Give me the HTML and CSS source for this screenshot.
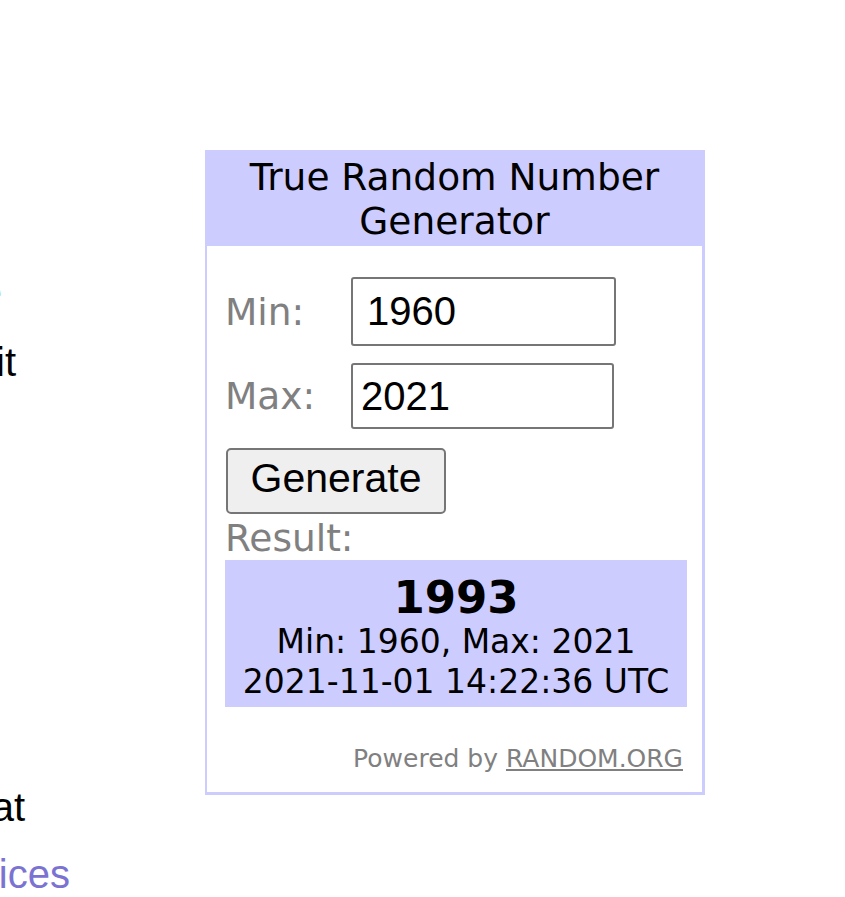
FILE: index.html
```html
<!DOCTYPE html>
<html>
<head>
<meta charset="utf-8">
<link rel="stylesheet" href="styles.css">
</head>
<body>
<div class="page">
  <div class="side">
    <div class="side-line l1">Learn more</div>
    <div class="side-line l2">about it</div>
    <div class="side-line l3">What</div>
    <div class="side-line l4">services</div>
  </div>
  <div class="widget">
    <div class="widget-head">True Random Number Generator</div>
    <div class="widget-body">
      <div class="row row-min">
        <span class="label">Min:</span>
        <input class="field field-min" type="text" value="1960">
      </div>
      <div class="row row-max">
        <span class="label">Max:</span>
        <input class="field field-max" type="text" value="2021">
      </div>
      <button class="gen" type="button">Generate</button>
      <div class="result-label">Result:</div>
      <div class="result">
        <div class="result-num">1993</div>
        <div class="result-line">Min: 1960, Max: 2021</div>
        <div class="result-line">2021-11-01 14:22:36 UTC</div>
      </div>
      <div class="powered">Powered by <a class="powered-link" href="#">RANDOM.ORG</a></div>
    </div>
  </div>
</div>
</body>
</html>
```
FILE: styles.css
```css
html, body {
  margin: 0;
  padding: 0;
  background: #ffffff;
  overflow: hidden;
}

.page {
  display: flex;
  align-items: flex-start;
  width: 845px;
  height: 897px;
}

.side {
  flex: none;
  width: 400px;
  margin-left: -320px;
  font-family: "Liberation Sans", Arial, sans-serif;
  font-size: 40px;
  line-height: 46px;
  color: #000000;
  text-align: right;
  white-space: nowrap;
}

.l1 { margin-top: 269px; padding-right: 78px; color: #66c2ff; }
.l2 { margin-top: 24px; padding-right: 64px; }
.l3 { margin-top: 399px; padding-right: 55px; }
.l4 { margin-top: 21px; padding-right: 10px; color: #7b73d2; }

.widget {
  flex: none;
  margin-top: 150px;
  margin-left: 125px;
  width: 495px;
  border-style: solid;
  border-color: #ccccff;
  border-width: 2px 3px 3px 2px;
  background: #ffffff;
  font-family: "DejaVu Sans", Verdana, sans-serif;
}

.widget-head {
  background: #ccccff;
  color: #000000;
  font-size: 37.5px;
  line-height: 44px;
  text-align: center;
  padding: 3px 0;
}

.widget-body {
  padding: 31px 15px 18px 18px;
}

.row {
  display: flex;
  align-items: center;
}

.row-max { margin-top: 17px; }

.label {
  width: 126px;
  flex: none;
  color: #808080;
  font-size: 37.5px;
  line-height: 44px;
}

.field {
  box-sizing: border-box;
  margin: 0;
  border: 2px solid #767676;
  border-radius: 3px;
  font-family: "Liberation Sans", Arial, sans-serif;
  font-size: 40px;
  color: #000000;
  background: #ffffff;
  outline: none;
}

.field-min { width: 265px; height: 69px; padding: 0 14px; }
.field-max { width: 263px; height: 66px; padding: 0 8px; }

.gen {
  display: block;
  box-sizing: border-box;
  margin: 19px 0 0 1px;
  width: 220px;
  height: 66px;
  padding: 0 0 6px 0;
  background: #efefef;
  border: 2px solid #767676;
  border-radius: 5px;
  font-family: "Liberation Sans", Arial, sans-serif;
  font-size: 41px;
  color: #000000;
}

.result-label {
  margin-top: 4px;
  color: #808080;
  font-size: 37.5px;
  line-height: 40px;
}

.result {
  margin-top: 2px;
  background: #ccccff;
  color: #000000;
  text-align: center;
  padding: 13px 0 5px 0;
}

.result-num {
  font-weight: bold;
  font-size: 45px;
  line-height: 49px;
}

.result-line {
  font-size: 33px;
  line-height: 40px;
}

.powered {
  margin-top: 37px;
  padding-right: 4px;
  text-align: right;
  color: #808080;
  font-size: 25px;
  line-height: 30px;
}

.powered-link {
  color: #808080;
  text-decoration: underline;
}
```
